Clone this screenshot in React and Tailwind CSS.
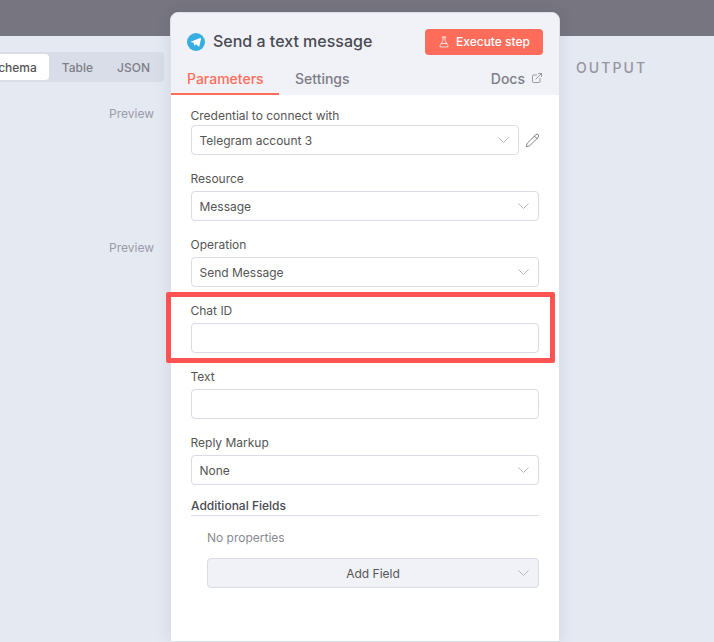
import { ExternalLink, FlaskConical, Pencil } from "lucide-react";

const font = { fontFamily: "Inter, sans-serif" };

const Chevron = () => (
  <svg width="11" height="6" viewBox="0 0 11 6" fill="none" stroke="#b4b7c2" strokeWidth="1">
    <path d="M.5.5l5 5 5-5" />
  </svg>
);

const Field = ({ label, children, className = "", labelClass = "h-[21px] leading-[17px]" }) => (
  <div className={className}>
    <div className={`-ml-[0.5px] text-[12px] text-[#555] ${labelClass}`}>{label}</div>
    {children}
  </div>
);

const Select = ({ value, className = "" }) => (
  <div className={`h-[30px] shrink-0 flex items-center justify-between pl-[7.5px] pr-[9px] bg-white border border-[#d9dce6] rounded-[4px] text-[12px] text-[#555] ${className}`}>
    <span className="pt-px">{value}</span>
    <Chevron />
  </div>
);

const Input = () => <div className="h-[30px] bg-white border border-[#d9dce6] rounded-[4px]" />;

const TelegramIcon = () => (
  <svg width="18" height="18" viewBox="0 0 18 18">
    <circle cx="9" cy="9" r="9" fill="#37aee2" />
    <path d="M3.6 8.8l9.6-3.8c.5-.2.9.1.8.7l-1.6 7.4c-.1.5-.5.6-.9.4L9 11.2l-1.2 1.2c-.2.2-.4.2-.5-.1l-.8-2.5-2.4-.7c-.5-.1-.5-.5.5-.3z" fill="#fff" />
  </svg>
);

export default function App() {
  return (
    <div style={font} className="relative w-[714px] h-[642px] overflow-hidden bg-[#e5e9f2]">
      <div className="h-9 bg-[#77757f]" />

      <div className="flex h-[606px]">
        {/* input side */}
        <div className="w-[170px] shrink-0 overflow-hidden">
          <div className="flex justify-end pr-1.5 pt-4">
            <div className="shrink-0 flex items-center h-[30px] pl-[3px] pr-[2px] bg-[#d9dde7] rounded-[4px] text-[12px] leading-[16px] font-medium text-[#7d7d87]">
              <div className="h-[26px] px-3 pt-px flex items-center bg-white rounded-[4px] text-[#555]">Schema</div>
              <div className="pl-[13px] pr-3 pt-px">Table</div>
              <div className="px-3 pt-px">JSON</div>
            </div>
          </div>
          <div className="mt-[17px] pr-4 text-right text-[12px] leading-[30px] text-[#9a9ca8]">Preview</div>
          <div className="mt-[104px] pr-4 text-right text-[12px] leading-[30px] text-[#9a9ca8]">Preview</div>
        </div>

        {/* node panel */}
        <div className="w-[390px] h-[630px] shrink-0 -mt-6 flex flex-col bg-white rounded-t-[8px] border border-[#dbdfe9] shadow-[0_0_16px_rgba(50,50,90,0.1)] overflow-hidden">
          <div className="bg-[#f0f2f8]">
            <div className="h-[44px] pl-4 pr-4 pt-4 flex items-start justify-between">
              <div className="flex items-center gap-2 h-[26px]">
                <TelegramIcon />
                <span className="-mt-0.5 text-[16px] font-medium text-[#4a4a52]">Send a text message</span>
              </div>
              <button className="h-[26px] w-[118px] flex items-center justify-center gap-[6px] bg-[#ff6d5a] rounded-[4px] text-[12px] font-medium text-white">
                <FlaskConical size={12} strokeWidth={1.5} />
                Execute step
              </button>
            </div>
            <div className="h-[38px] flex items-end justify-between pr-4 text-[14px] font-medium">
              <div className="flex">
                <div className="w-[108px] h-[28px] pl-4 pt-px border-b-[2px] border-[#ff6d5a] text-[#ff6d5a]">Parameters</div>
                <div className="ml-4 h-[28px] pt-px text-[#7d7d87]">Settings</div>
              </div>
              <div className="h-[28px] pt-px flex gap-[6px] text-[#7d7d87]">
                Docs
                <ExternalLink size={12} strokeWidth={1.5} className="mt-[4px]" />
              </div>
            </div>
          </div>

          <div className="flex-1 px-5 pt-[10px] flex flex-col">
            <Field label="Credential to connect with" labelClass="h-[20px] leading-[22px]">
              <div className="flex items-center">
                <Select value="Telegram account 3" className="w-[328px]" />
                <Pencil size={15} strokeWidth={1.25} className="ml-[6px] shrink-0 text-[#5f5f68]" />
              </div>
            </Field>
            <Field label="Resource" className="mt-[15px]"><Select value="Message" /></Field>
            <Field label="Operation" className="mt-[15px]"><Select value="Send Message" /></Field>
            <Field label="Chat ID" className="mt-[15px]"><Input /></Field>
            <Field label="Text" className="mt-[15px]"><Input /></Field>
            <Field label="Reply Markup" className="mt-[15px]"><Select value="None" /></Field>

            <div className="mt-[11px] h-[20px] pt-px border-b border-[#d9dce6] text-[12px] leading-[18px] font-[450] text-[#4a4a52]">Additional Fields</div>
            <div className="pl-4">
              <div className="mt-[12px] text-[12px] leading-[20px] text-[#8a8a94]">No properties</div>
              <div className="relative mt-[10px] h-[30px] pt-px flex items-center justify-center bg-[#f0f2f8] border border-[#d9dce6] rounded-[4px] text-[12px] text-[#555]">
                Add Field
                <span className="absolute right-[9px] top-[11px] flex"><Chevron /></span>
              </div>
            </div>
          </div>
        </div>

        {/* output side */}
        <div className="flex-1 pl-4 pt-[23px] text-[14px] leading-[18px] font-medium tracking-[2.1px] text-[#95959f]">OUTPUT</div>
      </div>

      {/* annotation */}
      <div className="absolute left-[166px] top-[292px] w-[389px] h-[71px] border-[5px] border-[#ff5252] rounded-[2px]" />
    </div>
  );
}
